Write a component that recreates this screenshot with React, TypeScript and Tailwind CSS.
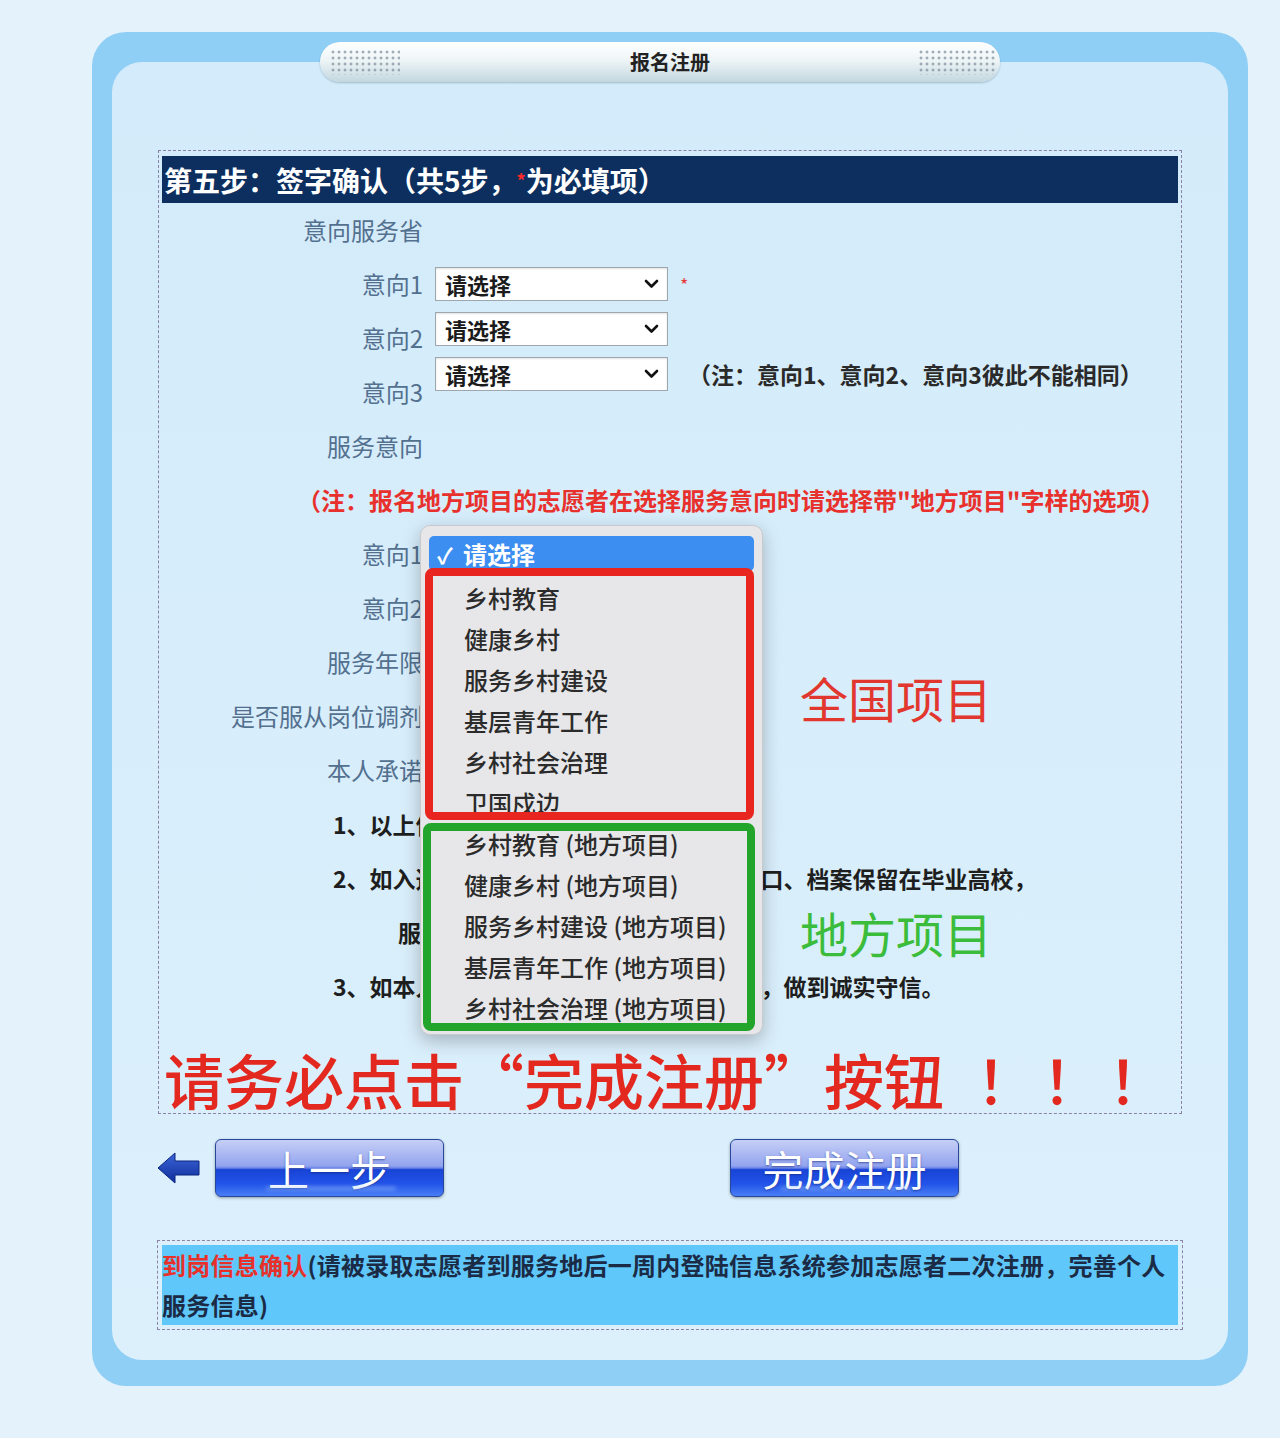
import type { ReactNode } from "react";

const FONT = "font-['Noto_Sans_CJK_SC','Noto_Sans','Liberation_Sans',sans-serif]";

function Chevron() {
  return (
    <svg width="15" height="10" viewBox="0 0 15 10" className="shrink-0">
      <path d="M2 2 L7.5 7.5 L13 2" fill="none" stroke="#111" strokeWidth="2.6" strokeLinecap="round" strokeLinejoin="round" />
    </svg>
  );
}

function Select() {
  return (
    <div className="flex h-[34px] w-[233px] items-center justify-between border border-[#9ea6ae] bg-white pl-[9px] pr-[8px] text-[22px] font-bold leading-none text-[#1b1b1b] shadow-[inset_0_1px_2px_rgba(0,0,0,0.12)]">
      <span>请选择</span>
      <Chevron />
    </div>
  );
}

function Row({ label, children }: { label?: string; children?: ReactNode }) {
  return (
    <div className="flex h-[54px] items-center">
      <div className="w-[261px] shrink-0 text-right text-[24px] leading-none text-[#53708f]">{label}</div>
      <div className="pl-[12px]">{children}</div>
    </div>
  );
}

function Line({ indent, children }: { indent: string; children: ReactNode }) {
  return (
    <div className={`flex h-[54px] items-center whitespace-nowrap text-[23px] font-bold leading-none text-[#1e1e1e] ${indent}`}>
      {children}
    </div>
  );
}

function GlossButton({ children }: { children: ReactNode }) {
  return (
    <div className="relative flex h-[58px] w-[229px] items-center justify-center overflow-hidden rounded-[6px] border border-[#27479a] bg-[linear-gradient(to_bottom,#c6cff6_0%,#93a4ef_46%,#6e86e8_50%,#1843d6_53%,#2253e8_78%,#4a7ff5_100%)] text-[41px] leading-[50px] text-white shadow-[0_1px_3px_rgba(0,0,0,0.35)] [text-shadow:0_1px_2px_rgba(20,40,120,0.6)]">
      <span className="relative">{children}</span>
      <span className="absolute bottom-[6px] left-[50px] h-[3px] w-[130px] rounded-full bg-[#9fc4ff] opacity-60 blur-[2px]" />
    </div>
  );
}

const NATIONAL = ["乡村教育", "健康乡村", "服务乡村建设", "基层青年工作", "乡村社会治理", "卫国戍边"];
const LOCAL = ["乡村教育 (地方项目)", "健康乡村 (地方项目)", "服务乡村建设 (地方项目)", "基层青年工作 (地方项目)", "乡村社会治理 (地方项目)"];

function Dropdown() {
  return (
    <div className="absolute left-[261px] top-[374px] h-[510px] w-[343px] overflow-hidden rounded-[10px] border border-[#c9cacd] bg-[#e7e7e9] px-[8px] pt-[10px] shadow-[0_6px_18px_rgba(0,0,0,0.25)]">
      <div className="flex h-[35px] items-center rounded-[5px] bg-[#3c8ef0] pl-[8px] text-[24px] font-bold leading-none text-white">
        <span className="w-[26px] text-[22px]">✓</span>
        <span>请选择</span>
      </div>
      <div className="pt-[6px]">
        {[...NATIONAL, ...LOCAL].map((item) => (
          <div key={item} className="flex h-[41px] items-center pl-[35px] text-[24px] font-medium leading-none text-[#2b2b2b]">
            {item}
          </div>
        ))}
      </div>
      <div className="absolute left-[4px] top-[42px] h-[252px] w-[329px] rounded-[8px] border-[8px] border-[#e8251e]" />
      <div className="absolute left-[2px] top-[297px] h-[208px] w-[332px] rounded-[8px] border-[8px] border-[#23a42a]" />
    </div>
  );
}

export default function App() {
  return (
    <div className={`min-h-[1438px] bg-[#e3f2fb] px-[92px] pt-[32px] ${FONT}`}>
      <div className="w-[1156px] rounded-[34px] bg-[#90cff5] px-[20px] pb-[26px] pt-[10px]">
        <div className="relative z-10 ml-[208px] flex h-[40px] w-[680px] items-center rounded-[20px] bg-[linear-gradient(to_bottom,#ffffff_0%,#eef5f7_45%,#c3d7df_100%)] shadow-[0_1px_2px_rgba(60,100,120,0.35)]">
          <span className="ml-[10px] h-[26px] w-[70px] bg-[radial-gradient(circle,#7d8c99_1.3px,transparent_1.7px)] bg-[length:6px_6px] opacity-70" />
          <span className="flex-1 pl-[22px] text-center text-[20px] font-bold leading-none text-[#222]">报名注册</span>
          <span className="mr-[5px] h-[26px] w-[77px] bg-[radial-gradient(circle,#7d8c99_1.3px,transparent_1.7px)] bg-[length:6px_6px] opacity-70" />
        </div>

        <div className="-mt-[20px] rounded-[30px] bg-[linear-gradient(to_bottom,#d3ebfa,#dcf0fc)] pb-[30px] pt-[88px]">
          <div className="relative mx-[46px] border border-dashed border-[#8c82a6] px-[3px] pt-[5px]">
            <div className="flex h-[47px] items-center bg-[#0c2f60] pl-[2px] text-[28px] font-bold leading-none text-white">
              第五步：签字确认（共5步，<span className="text-[18px] text-[#ff2b2b]">*</span>为必填项）
            </div>

            <Row label="意向服务省" />
            <div className="flex">
              <div className="w-[261px] shrink-0">
                {["意向1", "意向2", "意向3"].map((l) => (
                  <div key={l} className="flex h-[54px] items-center justify-end text-[24px] leading-none text-[#53708f]">
                    {l}
                  </div>
                ))}
              </div>
              <div className="flex flex-col gap-[11px] pl-[12px] pt-[10px]">
                <div className="flex items-center">
                  <Select />
                  <span className="ml-[12px] text-[18px] text-[#e83a3a]">*</span>
                </div>
                <Select />
                <div className="flex items-center">
                  <Select />
                  <span className="ml-[20px] text-[23px] font-bold leading-none text-[#2a2a2a]">
                    （注：意向1、意向2、意向3彼此不能相同）
                  </span>
                </div>
              </div>
            </div>
            <Row label="服务意向" />
            <div className="flex h-[54px] items-center pl-[135px] text-[24px] font-bold leading-none text-[#e8302c]">
              （注：报名地方项目的志愿者在选择服务意向时请选择带"地方项目"字样的选项）
            </div>
            <Row label="意向1" />
            <Row label="意向2" />
            <Row label="服务年限" />
            <Row label="是否服从岗位调剂" />
            <Row label="本人承诺" />
            <Line indent="pl-[171px]">1、以上信息真实有效。</Line>
            <Line indent="pl-[171px]">2、如入选西部计划，本人在服务期间的户口、档案保留在毕业高校，</Line>
            <Line indent="pl-[236px]">服务期满后按规定办理相关手续。</Line>
            <Line indent="pl-[171px]">3、如本人所填信息不实，愿承担相应责任，做到诚实守信。</Line>

            <div className="flex h-[100px] items-start whitespace-nowrap pl-[2px] pt-[32px] text-[60px] font-medium leading-[68px] text-[#e3291f]">
              <span>请务必点击“完成注册”按钮</span>
              <span className="ml-[32px] tracking-[6px]">！！！</span>
            </div>

            <Dropdown />
            <div className="absolute left-[641px] top-[522px] text-[48px] leading-[48px] text-[#e2372e]">全国项目</div>
            <div className="absolute left-[641px] top-[757px] text-[48px] leading-[48px] text-[#3bbd3b]">地方项目</div>
          </div>

          <div className="ml-[45px] mt-[25px] flex items-center">
            <svg width="43" height="32" viewBox="0 0 43 32" className="mr-[15px]">
              <defs>
                <linearGradient id="arr" x1="0" y1="0" x2="0" y2="1">
                  <stop offset="0" stopColor="#3b63d6" />
                  <stop offset="1" stopColor="#0f2f9c" />
                </linearGradient>
              </defs>
              <polygon points="1,16 18,1 18,9 42,9 42,23 18,23 18,31" fill="url(#arr)" stroke="#0b2580" strokeWidth="1" />
            </svg>
            <GlossButton>上一步</GlossButton>
            <div className="ml-[286px]">
              <GlossButton>完成注册</GlossButton>
            </div>
          </div>

          <div className="mx-[45px] mt-[43px] border border-dashed border-[#8c82a6] p-[4px]">
            <div className="h-[80px] bg-[#5fc7fa] text-[24px] font-bold leading-[40px] tracking-[0.25px] text-[#1c2b45]">
              <span className="text-[#e8302a]">到岗信息确认</span>
              (请被录取志愿者到服务地后一周内登陆信息系统参加志愿者二次注册，完善个人
              <br />
              服务信息)
            </div>
          </div>
        </div>
      </div>
    </div>
  );
}
